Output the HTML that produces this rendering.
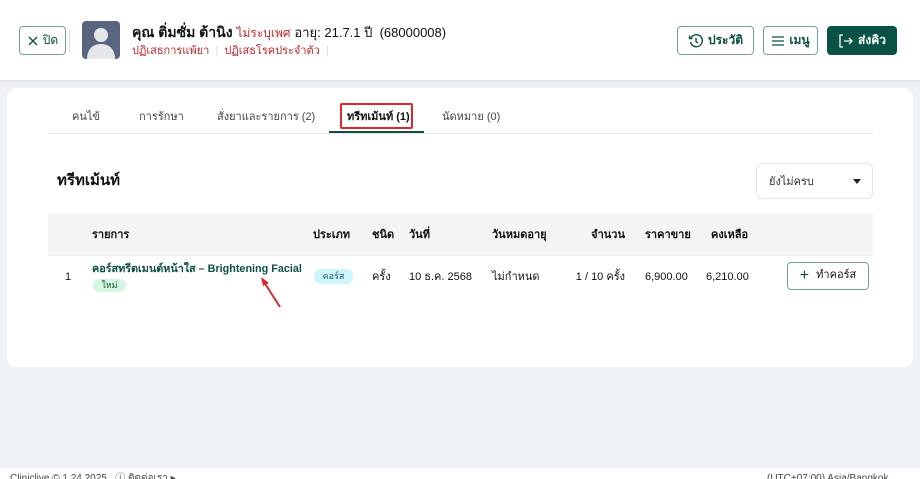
<!DOCTYPE html>
<html><head><meta charset="utf-8"><style>
*{box-sizing:border-box;margin:0;padding:0}
html,body{width:920px;height:479px;overflow:hidden}
body{background:#eef2f6;font-family:"Liberation Sans","Noto Sans CJK SC",sans-serif;color:#1f2937;position:relative;font-size:12px;line-height:1.2}
.abs{position:absolute;white-space:nowrap}
.hdr{position:absolute;left:0;top:0;width:920px;height:80px;background:#fff;box-shadow:0 1px 3px rgba(0,0,0,.08)}
.btn{position:absolute;border:1px solid #6fa39a;border-radius:4px;background:#fff;color:#0d4f44;font-weight:bold;font-size:12px;display:flex;align-items:center;justify-content:center;gap:4px}
.card{position:absolute;left:7px;top:88px;width:906px;height:279px;background:#fff;border-radius:10px}
.th{font-weight:bold;font-size:11px;color:#111}
.td{font-size:11px;color:#111}
</style></head><body>
<div class="hdr"></div>
<div class="btn" style="left:19px;top:26px;width:47px;height:29px;font-weight:normal;color:#0d4f44"><svg width="12" height="12" viewBox="0 0 12 12"><path d="M2 2L10 10M10 2L2 10" stroke="#0d4f44" stroke-width="1.3"/></svg>ปิด</div>
<div class="abs" style="left:69px;top:30px;width:1px;height:22px;background:#ddd"></div>
<div class="abs" style="left:82px;top:21px;width:38px;height:38px;background:#586480;border-radius:4px;overflow:hidden"><svg width="38" height="38" viewBox="0 0 38 38"><circle cx="19" cy="14" r="7" fill="#e5e7eb"/><path d="M5 38C5 28 11 23 19 23C27 23 33 28 33 38Z" fill="#e5e7eb"/></svg></div>
<div class="abs" style="left:132px;top:24px;font-size:14px;font-weight:bold;color:#111">คุณ ติ่มซั่ม ต้านิง <span style="color:#c0262d;font-weight:normal;font-size:12px">ไม่ระบุเพศ</span> <span style="font-weight:normal;font-size:13px">อายุ: 21.7.1 ปี &nbsp;(68000008)</span></div>
<div class="abs" style="left:132px;top:45px;font-size:11px;color:#c0262d">ปฏิเสธการแพ้ยา <span style="color:#ddd">&nbsp;|&nbsp;</span> ปฏิเสธโรคประจำตัว <span style="color:#ddd">&nbsp;|</span></div>
<div class="btn" style="left:677px;top:26px;width:77px;height:29px"><svg width="16" height="16" viewBox="0 0 16 16" fill="none" stroke="#0d4f44" stroke-width="1.4"><path d="M3 5A6 6 0 1 1 2.5 9"/><path d="M1.5 2.5V5.5H4.5"/><path d="M8 5V8.5L10 10"/></svg>ประวัติ</div>
<div class="btn" style="left:763px;top:26px;width:55px;height:29px"><svg width="14" height="12" viewBox="0 0 14 12" stroke="#0d4f44" stroke-width="1.3"><path d="M1 2H13M1 6H13M1 10H13"/></svg>เมนู</div>
<div class="btn" style="left:827px;top:26px;width:70px;height:29px;background:#0a5245;border-color:#0a5245;color:#fff"><svg width="16" height="14" viewBox="0 0 16 14" fill="none" stroke="#fff" stroke-width="1.3"><path d="M5 1H2V13H5"/><path d="M6 7H14M11 4L14 7L11 10"/></svg>ส่งคิว</div>

<div class="card"></div>
<div class="abs" style="left:48px;top:133px;width:825px;height:1px;background:#e5e7eb"></div>
<div class="abs" style="left:72px;top:111px;font-size:11px;color:#444">คนไข้</div>
<div class="abs" style="left:139px;top:111px;font-size:11px;color:#444">การรักษา</div>
<div class="abs" style="left:217px;top:111px;font-size:11px;color:#444">สั่งยาและรายการ (2)</div>
<div class="abs" style="left:340px;top:103px;width:73px;height:26px;border:2px solid #e0262d;border-radius:2px"></div>
<div class="abs" style="left:347px;top:111px;font-size:11px;font-weight:bold;color:#111">ทรีทเม้นท์ (1)</div>
<div class="abs" style="left:329px;top:131px;width:95px;height:2px;background:#0d4f44"></div>
<div class="abs" style="left:442px;top:111px;font-size:11px;color:#444">นัดหมาย (0)</div>

<div class="abs" style="left:57px;top:172px;font-size:15px;font-weight:bold;color:#111">ทรีทเม้นท์</div>
<div class="abs" style="left:756px;top:163px;width:117px;height:36px;border:1px solid #e2e6ea;border-radius:6px"></div>
<div class="abs" style="left:769px;top:176px;font-size:11px;color:#333">ยังไม่ครบ</div>
<svg class="abs" style="left:853px;top:179px" width="8" height="5"><path d="M0 0H8L4 5Z" fill="#222"/></svg>

<div class="abs" style="left:48px;top:214px;width:825px;height:41px;background:#f3f4f6"></div>
<div class="abs" style="left:48px;top:255px;width:825px;height:1px;background:#eceef0"></div>
<div class="abs th" style="left:92px;top:229px">รายการ</div>
<div class="abs th" style="left:313px;top:229px">ประเภท</div>
<div class="abs th" style="left:372px;top:229px">ชนิด</div>
<div class="abs th" style="left:409px;top:229px">วันที่</div>
<div class="abs th" style="left:492px;top:229px">วันหมดอายุ</div>
<div class="abs th" style="left:565px;top:229px;width:60px;text-align:right">จำนวน</div>
<div class="abs th" style="left:645px;top:229px">ราคาขาย</div>
<div class="abs th" style="left:711px;top:229px">คงเหลือ</div>

<div class="abs td" style="left:65px;top:271px">1</div>
<div class="abs" style="left:92px;top:263px;font-size:10.8px;font-weight:bold;color:#0d4f44">คอร์สทรีตเมนต์หน้าใส – Brightening Facial</div>
<div class="abs" style="left:93px;top:279px;width:33px;height:13px;background:#d6f5e0;border-radius:6px;font-size:9px;color:#166534;text-align:center;line-height:13px">ใหม่</div>
<div class="abs" style="left:314px;top:269px;width:39px;height:15px;background:#cff4fa;border-radius:7px;font-size:9px;color:#155e75;text-align:center;line-height:15px">คอร์ส</div>
<div class="abs td" style="left:372px;top:271px">ครั้ง</div>
<div class="abs td" style="left:409px;top:271px">10 ธ.ค. 2568</div>
<div class="abs td" style="left:492px;top:271px">ไม่กำหนด</div>
<div class="abs td" style="left:555px;top:271px;width:70px;text-align:right">1 / 10 ครั้ง</div>
<div class="abs td" style="left:645px;top:271px">6,900.00</div>
<div class="abs td" style="left:706px;top:271px">6,210.00</div>
<div class="btn" style="left:787px;top:262px;width:82px;height:28px;font-weight:normal;font-size:11px;color:#111"><span style="font-size:16px;color:#0d4f44;line-height:1">+</span>&nbsp;ทำคอร์ส</div>
<svg class="abs" style="left:255px;top:272px" width="30" height="40"><path d="M25 35L9 10" stroke="#e0262d" stroke-width="2"/><path d="M6 5L14 11L8 14Z" fill="#e0262d"/></svg>

<div class="abs" style="left:0;top:468px;width:920px;height:11px;background:#fff;overflow:hidden">
<div class="abs" style="left:10px;top:5px;font-size:10px;color:#444">Cliniclive © 1.24.2025 &nbsp; ⓘ ติดต่อเรา ▸</div>
<div class="abs" style="left:767px;top:5px;font-size:10px;color:#444">(UTC+07:00) Asia/Bangkok</div>
</div>
</body></html>
